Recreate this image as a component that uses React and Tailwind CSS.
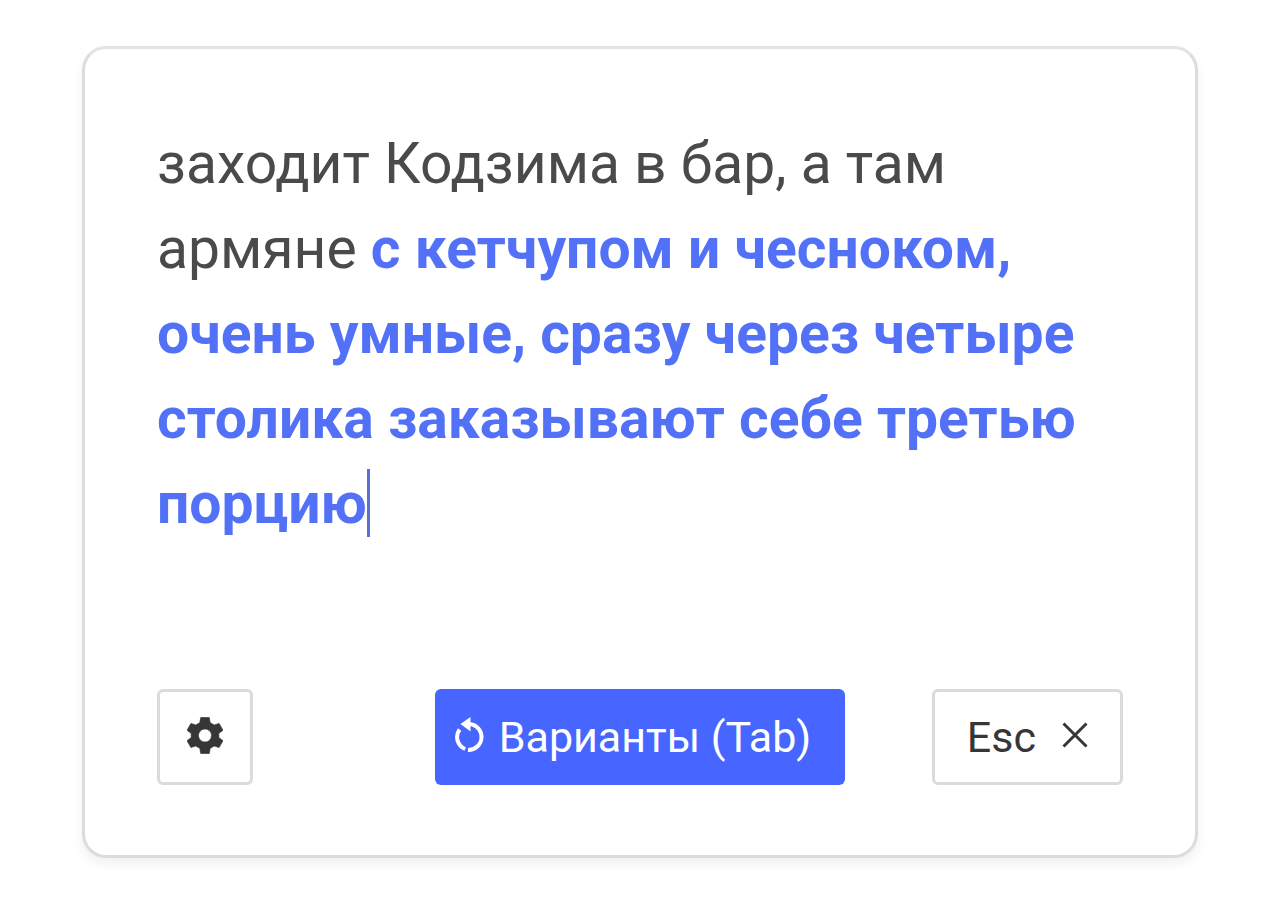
const prompt = "заходит Кодзима в бар, а там армяне";
const completion =
  "с кетчупом и чесноком, очень умные, сразу через четыре столика заказывают себе третью порцию";

function GearIcon() {
  return (
    <svg
      width="36"
      height="37"
      viewBox="-1 -1 110 112"
      fill="currentColor"
      stroke="currentColor"
      strokeWidth="2"
      strokeLinejoin="round"
      className="mb-1"
      aria-hidden="true"
    >
      <path
        fillRule="evenodd"
        d="M41 0H67L70 16Q76 19 82 23L97 18 109 39 96 49Q97 55 96 61L109 71 97 92 82 87Q76 91 70 94L67 110H41L38 94Q32 91 26 87L11 92-1 71 12 61Q11 55 12 49L-1 39 11 18 26 23Q32 19 38 16ZM54 35A20 20 0 1 0 54 75A20 20 0 1 0 54 35Z"
      />
    </svg>
  );
}

function RetryIcon() {
  return (
    <svg
      width="30"
      height="36"
      viewBox="0 0 30 36"
      fill="none"
      stroke="currentColor"
      strokeWidth="4"
      className="mb-1"
      aria-hidden="true"
    >
      <path d="M14 7A13 13 0 0 1 13 33" />
      <path d="M4.6 12.5A12.8 12.8 0 0 0 10.2 32" />
      <path d="M15.5 0V14.5L5.5 7Z" fill="currentColor" stroke="none" />
    </svg>
  );
}

function CloseIcon() {
  return (
    <svg
      width="26"
      height="26"
      viewBox="0 0 26 26"
      fill="none"
      stroke="currentColor"
      strokeWidth="3"
      className="mb-1"
      aria-hidden="true"
    >
      <path d="M1.5 1.5 24.5 24.5M24.5 1.5 1.5 24.5" />
    </svg>
  );
}

function Editor() {
  return (
    <div
      role="textbox"
      aria-multiline="true"
      aria-label="Текст"
      tabIndex={0}
      className="min-h-[568px] text-[57px] leading-[85px] text-[#4a4a4a] outline-none"
    >
      {prompt}{" "}
      <span className="font-bold text-[#5271f7]">{completion}</span>
      <span className="-mr-1 inline-block h-[68px] w-[3px] bg-[#5b6fd6] align-[-14px]" />
    </div>
  );
}

function Toolbar() {
  return (
    <div className="grid grid-cols-[1fr_auto_1fr] items-center text-[43px]">
      <button
        type="button"
        aria-label="Настройки"
        className="flex size-24 items-center justify-center rounded-md border-3 border-[#dbdbdb] text-[#363636]"
      >
        <GearIcon />
      </button>
      <button
        type="button"
        className="flex h-24 items-center gap-[14px] rounded-md bg-[#4666ff] pr-[34px] pl-5 text-white"
      >
        <RetryIcon />
        Варианты (Tab)
      </button>
      <button
        type="button"
        className="flex h-24 items-center gap-[26px] justify-self-end rounded-md border-3 border-[#dbdbdb] px-8 text-[#363636]"
      >
        Esc
        <CloseIcon />
      </button>
    </div>
  );
}

export default function App() {
  return (
    <main className="bg-white px-[82px] py-[46px] font-[Roboto,sans-serif]">
      <section className="rounded-3xl border-3 border-[#dcdcdc] border-t-[#e3e3e3] bg-white px-[72px] pt-[72px] pb-[70px] shadow-[0_6px_12px_rgba(0,0,0,0.06)]">
        <Editor />
        <Toolbar />
      </section>
    </main>
  );
}
